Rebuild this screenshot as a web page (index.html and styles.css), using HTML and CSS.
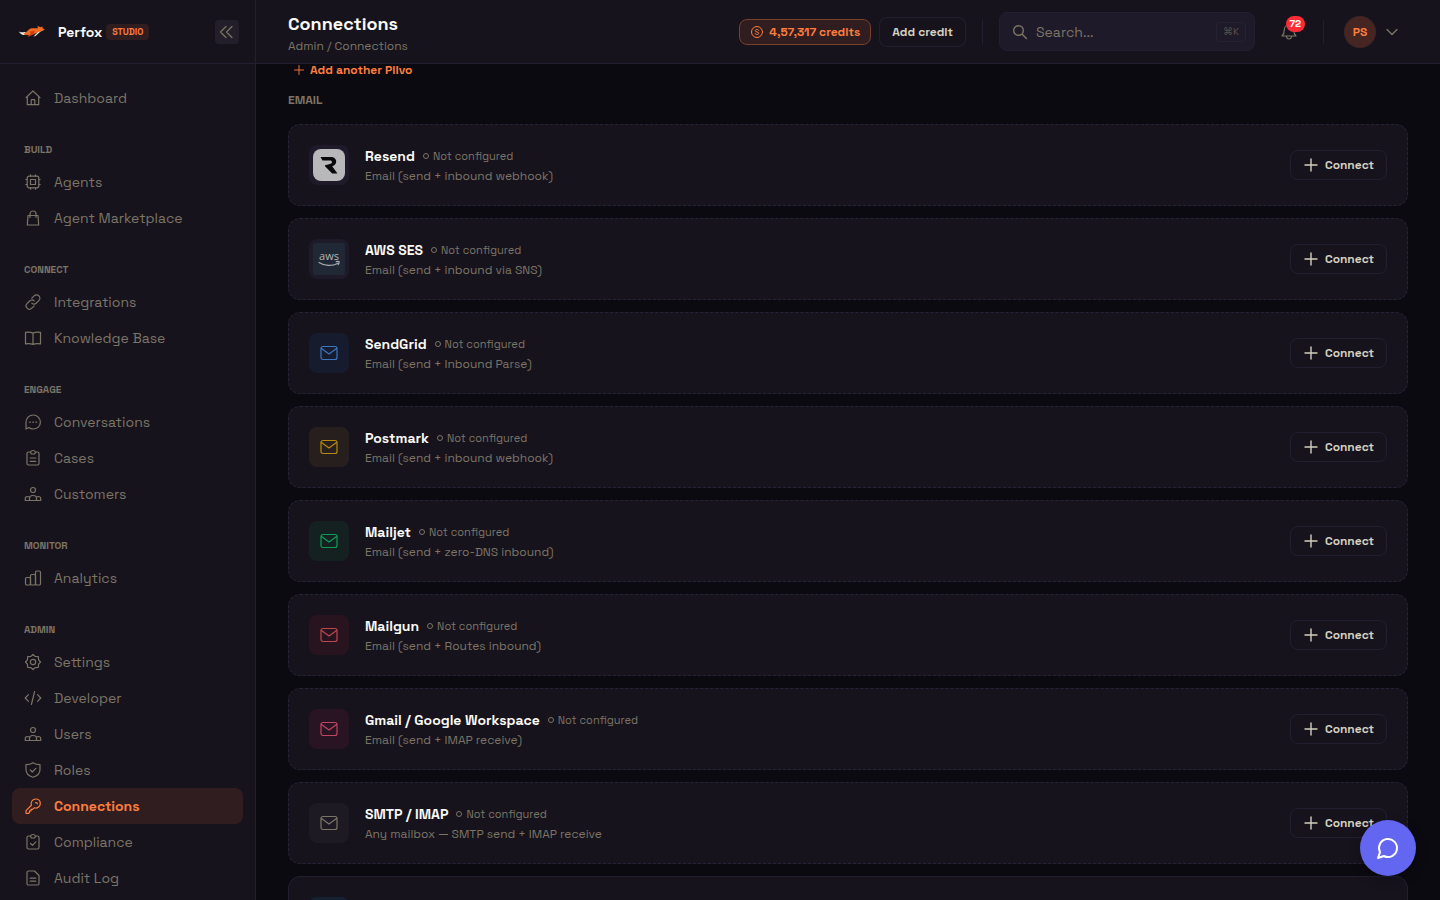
FILE: index.html
```html
<!DOCTYPE html>
<html lang="en">
<head>
<meta charset="utf-8">
<meta name="viewport" content="width=device-width, initial-scale=1">
<title>Connections – Perfox Studio</title>
<link rel="stylesheet" href="styles.css">
</head>
<body>
<svg class="sprite" aria-hidden="true">
  <symbol id="home" viewBox="0 0 18 18"><path d="M2 8.600 9 2l7 6.600M3.300 7.500v8.200h11.400V7.500M7.200 15.700v-4.200c0-.5.3-.8.8-.8h2c.5 0 .8.3.8.8v4.200"/></symbol>
  <symbol id="cpu" viewBox="0 0 18 18"><rect x="3.200" y="3.200" width="11.600" height="11.600" rx="2"/><rect x="6.500" y="6.500" width="5" height="5"/><path d="M6.500 1.800v1.400M11.500 1.800v1.400M6.500 14.800v1.400M11.500 14.800v1.400M1.800 6.500h1.400M1.800 11.500h1.400M14.800 6.500h1.400M14.800 11.500h1.400"/></symbol>
  <symbol id="bag" viewBox="0 0 18 18"><path d="M4 6.500h10l.7 9.500H3.300zM6 8.500V5a3 3 0 0 1 6 0v3.500"/></symbol>
  <symbol id="link" viewBox="0 0 18 18"><path d="m7.800 5.200 2.300-2.300c1.400-1.400 3.500-1.400 4.800-.1s1.300 3.400-.1 4.800l-2.400 2.400c-1.300 1.300-3.300 1.400-4.600.1M10.200 12.800l-2.300 2.300c-1.400 1.400-3.500 1.400-4.800.1s-1.300-3.400.1-4.800L5.600 8c1.300-1.300 3.300-1.400 4.600-.1"/></symbol>
  <symbol id="book" viewBox="0 0 18 18"><path d="M9 4.200C7.600 3.300 5 2.900 1.500 3.300v11.600c3.500-.4 6.100 0 7.500.6 1.400-.6 4-1 7.500-.6V3.300C13 2.900 10.400 3.300 9 4.200zM9 4.200v11.300"/></symbol>
  <symbol id="chat" viewBox="0 0 18 18"><path d="M2 16v-6.700C2 5.300 5.200 2 9.200 2s7.200 3.200 7.200 7.200-3.200 6.800-7.200 6.800c-1.700 0-3.200-.5-4.500-1.500L2 16z"/><path d="M5.700 9.200h.7M8.800 9.200h.7M11.900 9.200h.7"/></symbol>
  <symbol id="clipboard" viewBox="0 0 18 18"><path d="M6 3H4.500C3.700 3 3 3.700 3 4.500v10c0 .9.700 1.500 1.500 1.500h9c.8 0 1.500-.6 1.500-1.500v-10c0-.8-.7-1.500-1.500-1.500H12M6.500 3.200C7 2 8 1.500 9 1.500s2 .5 2.500 1.700L10.700 5H7.300zM6.200 9h5.600M6.200 12.300h5.600"/></symbol>
  <symbol id="clipcheck" viewBox="0 0 18 18"><path d="M6 3H4.500C3.700 3 3 3.700 3 4.500v10c0 .9.700 1.500 1.500 1.500h9c.8 0 1.500-.6 1.500-1.500v-10c0-.8-.7-1.500-1.500-1.500H12M6.500 3.200C7 2 8 1.500 9 1.500s2 .5 2.500 1.700L10.700 5H7.300zM6.500 10.500l2 1.800 3.300-3.500"/></symbol>
  <symbol id="users" viewBox="0 0 18 18"><circle cx="9" cy="5" r="2.500"/><path d="M5.500 15.500v-2.200c0-1.600 1.500-2.800 3.500-2.800s3.500 1.200 3.500 2.800v2.200M1.300 15.500h15.400v-2c0-1.300-1-2-2.200-2-.8 0-1.400.3-1.800.7M5.300 12.200c-.4-.4-1-.7-1.800-.7-1.200 0-2.200.7-2.200 2v2"/></symbol>
  <symbol id="bars" viewBox="0 0 18 18"><rect x="1.500" y="8.500" width="5" height="7.500" rx="1.300"/><rect x="6.500" y="5.500" width="5" height="10.500" rx="1.300"/><rect x="11.500" y="2" width="5" height="14" rx="1.300"/></symbol>
  <symbol id="gear" viewBox="0 0 18 18"><path d="M9 1.500 11.100 3.400 14.300 3.700 14.600 6.900 16.500 9 14.600 11.100 14.300 14.300 11.100 14.600 9 16.500 6.900 14.600 3.700 14.300 3.400 11.100 1.500 9 3.400 6.900 3.700 3.700 6.900 3.400z"/><circle cx="9" cy="9" r="2.700"/></symbol>
  <symbol id="code" viewBox="0 0 18 18"><path d="M4.500 5.700 1.200 9l3.300 3.300M13.500 5.700 16.800 9l-3.300 3.300M10.600 2.500 7.400 15.500"/></symbol>
  <symbol id="shield" viewBox="0 0 18 18"><path d="M9 1.700c1.800 1.300 4.200 2 7 2v4.800c0 4-2.800 6.500-7 7.800-4.200-1.300-7-3.800-7-7.800V3.700c2.800 0 5.200-.7 7-2zM6.300 9l2 2 3.500-3.700"/></symbol>
  <symbol id="key" viewBox="0 0 18 18"><path d="M7.400 8.300C6.200 5.300 8.500 2 11.800 2 14.300 2 16.300 4 16.300 6.400c0 3.300-3.300 5.600-6.200 4.400L8.600 12.300H7v1.600H5.500v1.600L4.700 16.300H2v-2.700z"/><path d="M11.500 5.700c.8-.3 1.700.2 1.800 1.100"/></symbol>
  <symbol id="doc" viewBox="0 0 18 18"><path d="M4.500 2h6L15 6.500v8c0 .9-.7 1.500-1.500 1.500h-9C3.700 16 3 15.400 3 14.500v-11C3 2.700 3.700 2 4.500 2zM6.200 9.200h5.600M6.200 12.200h5.600"/></symbol>
  <symbol id="mail" viewBox="0 0 20 20"><rect x="2" y="3.500" width="16" height="13" rx="2"/><path d="m2.500 5.500 7.500 5.500 7.500-5.500"/></symbol>
  <symbol id="plus" viewBox="0 0 16 16"><path d="M8 2v12M2 8h12"/></symbol>
</svg>
<div class="app">
  <aside class="sidebar">
    <div class="brand">
      <svg class="fox" viewBox="0 0 28 14" aria-hidden="true"><path fill="#f4eee6" d="M.8 6.500c2.200 1.200 4.200.8 6 .6L9 8.500C7 10.500 3.200 10.700.8 6.500z"/><path fill="#f26a21" d="M5.500 8.200C9 8.300 9.600 3.800 14 3.300c2.200-.2 4 .4 6-.3L19.300.8l3 1.500 2-.9.5 2.100L27 4.200l-3 1.700-4.500 1.500-4 1.800-3.500.8H9.500L6.300 9.400z"/><path fill="#c93a13" d="m12 6.500 5-.5-2 3.700-4.500 2.100-1-.8 3.300-2z"/><path fill="#f4eee6" d="m27 4.500-4.500 2-5 4.500-2 .5 4.200-4.300z"/></svg>
      <span class="brand-name">Perfox</span><span class="brand-tag">STUDIO</span>
      <button class="collapse" type="button" aria-label="Collapse sidebar"><svg viewBox="0 0 16 16"><path d="M7 2.500 1.500 8 7 13.500M13 2.500 7.500 8l5.500 5.500"/></svg></button>
    </div>
    <nav class="nav" aria-label="Main">
      <a href="#"><svg><use href="#home"/></svg>Dashboard</a>
      <h2>BUILD</h2>
      <a href="#"><svg><use href="#cpu"/></svg>Agents</a>
      <a href="#"><svg><use href="#bag"/></svg>Agent Marketplace</a>
      <h2>CONNECT</h2>
      <a href="#"><svg><use href="#link"/></svg>Integrations</a>
      <a href="#"><svg><use href="#book"/></svg>Knowledge Base</a>
      <h2>ENGAGE</h2>
      <a href="#"><svg><use href="#chat"/></svg>Conversations</a>
      <a href="#"><svg><use href="#clipboard"/></svg>Cases</a>
      <a href="#"><svg><use href="#users"/></svg>Customers</a>
      <h2>MONITOR</h2>
      <a href="#"><svg><use href="#bars"/></svg>Analytics</a>
      <h2>ADMIN</h2>
      <a href="#"><svg><use href="#gear"/></svg>Settings</a>
      <a href="#"><svg><use href="#code"/></svg>Developer</a>
      <a href="#"><svg><use href="#users"/></svg>Users</a>
      <a href="#"><svg><use href="#shield"/></svg>Roles</a>
      <a href="#" class="active" aria-current="page"><svg><use href="#key"/></svg>Connections</a>
      <a href="#"><svg><use href="#clipcheck"/></svg>Compliance</a>
      <a href="#"><svg><use href="#doc"/></svg>Audit Log</a>
    </nav>
  </aside>
  <div class="page">
    <header class="topbar">
      <div class="heading"><h1>Connections</h1><p>Admin / Connections</p></div>
      <div class="account">
        <button class="credits" type="button"><svg viewBox="0 0 14 14"><circle cx="7" cy="7" r="5.500"/><path d="M8.700 5.500C8.500 4.800 7.800 4.500 7 4.500c-1 0-1.700.4-1.700 1.200C5.300 7.500 8.800 6.500 8.800 8.300c0 .8-.8 1.200-1.800 1.200-.9 0-1.700-.4-1.900-1.100"/></svg>4,57,317 credits</button>
        <button class="btn" type="button">Add credit</button>
      </div>
      <span class="divider"></span>
      <label class="search">
        <svg viewBox="0 0 16 16"><circle cx="6.500" cy="6.500" r="4.800"/><path d="m10.200 10.200 4.300 4.300"/></svg>
        <input type="search" placeholder="Search..." aria-label="Search">
        <kbd>⌘K</kbd>
      </label>
      <button class="bell" type="button" aria-label="Notifications"><svg viewBox="0 0 18 18"><path d="M9 2C6.300 2 4.300 4 4.300 6.700c0 3.300-.8 4.800-2.300 6.300h14c-1.500-1.500-2.300-3-2.300-6.300C13.700 4 11.700 2 9 2zM6.500 13.500c.2 1.500 1.200 2.500 2.500 2.500s2.300-1 2.500-2.500"/></svg><span class="count">72</span></button>
      <span class="divider"></span>
      <button class="user" type="button"><span class="avatar">PS</span><svg viewBox="0 0 16 16"><path d="m3 5.500 5 5 5-5"/></svg></button>
    </header>
    <main class="content">
      <button class="add" type="button"><svg><use href="#plus"/></svg>Add another Plivo</button>
      <h2 class="section">EMAIL</h2>
      <ul class="cards">
        <li class="card">
          <span class="tile brandtile"><svg viewBox="0 0 32 32"><rect width="32" height="32" rx="8" fill="#b8b8ba"/><path fill="#08080a" d="M7.500 8H18c3 0 5.200 1.800 5.200 4.500 0 2.300-1.500 4-4 4.700l5.200 7.300h-5.200l-7.200-7.200v-1l5-1.300c1.400-.4 2-1 2-1.900 0-1-.8-1.700-2-1.700H9.500z"/></svg></span>
          <div class="info"><div class="line"><h3>Resend</h3><span class="status">Not configured</span></div><p>Email (send + inbound webhook)</p></div>
          <button class="btn connect" type="button"><svg><use href="#plus"/></svg>Connect</button>
        </li>
        <li class="card">
          <span class="tile brandtile"><svg viewBox="0 0 32 32"><rect width="32" height="32" rx="2" fill="#1f2834"/><text x="16" y="17" text-anchor="middle" class="aws">aws</text><path fill="none" stroke="#a9aaad" stroke-width="1.200" stroke-linecap="round" d="M6 19.500c5.500 3.600 13 4 19 .7M23.200 18.700c3.700-.8 3.700.3 2 3"/></svg></span>
          <div class="info"><div class="line"><h3>AWS SES</h3><span class="status">Not configured</span></div><p>Email (send + inbound via SNS)</p></div>
          <button class="btn connect" type="button"><svg><use href="#plus"/></svg>Connect</button>
        </li>
        <li class="card">
          <span class="tile blue"><svg><use href="#mail"/></svg></span>
          <div class="info"><div class="line"><h3>SendGrid</h3><span class="status">Not configured</span></div><p>Email (send + Inbound Parse)</p></div>
          <button class="btn connect" type="button"><svg><use href="#plus"/></svg>Connect</button>
        </li>
        <li class="card">
          <span class="tile amber"><svg><use href="#mail"/></svg></span>
          <div class="info"><div class="line"><h3>Postmark</h3><span class="status">Not configured</span></div><p>Email (send + inbound webhook)</p></div>
          <button class="btn connect" type="button"><svg><use href="#plus"/></svg>Connect</button>
        </li>
        <li class="card">
          <span class="tile green"><svg><use href="#mail"/></svg></span>
          <div class="info"><div class="line"><h3>Mailjet</h3><span class="status">Not configured</span></div><p>Email (send + zero-DNS inbound)</p></div>
          <button class="btn connect" type="button"><svg><use href="#plus"/></svg>Connect</button>
        </li>
        <li class="card">
          <span class="tile red"><svg><use href="#mail"/></svg></span>
          <div class="info"><div class="line"><h3>Mailgun</h3><span class="status">Not configured</span></div><p>Email (send + Routes inbound)</p></div>
          <button class="btn connect" type="button"><svg><use href="#plus"/></svg>Connect</button>
        </li>
        <li class="card">
          <span class="tile rose"><svg><use href="#mail"/></svg></span>
          <div class="info"><div class="line"><h3>Gmail / Google Workspace</h3><span class="status">Not configured</span></div><p>Email (send + IMAP receive)</p></div>
          <button class="btn connect" type="button"><svg><use href="#plus"/></svg>Connect</button>
        </li>
        <li class="card">
          <span class="tile gray"><svg><use href="#mail"/></svg></span>
          <div class="info"><div class="line"><h3>SMTP / IMAP</h3><span class="status">Not configured</span></div><p>Any mailbox — SMTP send + IMAP receive</p></div>
          <button class="btn connect" type="button"><svg><use href="#plus"/></svg>Connect</button>
        </li>
        <li class="card on"><span class="tile sky"></span></li>
      </ul>
    </main>
  </div>
  <button class="fab" type="button" aria-label="Open chat"><svg viewBox="0 0 24 24"><path d="M7.900 20A9 9 0 1 0 4 16.100L2 22z"/></svg></button>
</div>
</body>
</html>
```
FILE: styles.css
```css
:root {
  --bg: #0b0a10;
  --panel: #16131d;
  --raised: #1e1a29;
  --line: #231f30;
  --muted: #7c7566;
  --soft: #d5cfbf;
  --bright: #faf9f4;
  --orange: #ff7d3f;
}
* { box-sizing: border-box; }
body {
  margin: 0;
  background: var(--bg);
  color: var(--bright);
  font-family: "Space Grotesk", Inter, "Liberation Sans", sans-serif;
  font-size: 14px;
  line-height: 20px;
}
h1, h2, h3, p, ul { margin: 0; padding: 0; }
button, input, kbd { font: inherit; color: inherit; }
button { background: none; border: 0; padding: 0; cursor: pointer; }
svg { fill: none; stroke: currentColor; stroke-width: 1.2; stroke-linecap: round; stroke-linejoin: round; flex: none; }
.sprite { position: absolute; width: 0; height: 0; }
.app { display: flex; height: 100vh; overflow: hidden; }

.sidebar { width: 256px; flex: none; background: var(--panel); border-right: 1px solid var(--line); display: flex; flex-direction: column; }
.brand { height: 64px; flex: none; display: flex; align-items: center; padding: 0 16px 0 18px; border-bottom: 1px solid var(--line); }
.fox { width: 28px; height: 14px; stroke: none; }
.brand-name { margin-left: 12px; font-weight: 700; }
.brand-tag { margin-left: 4px; padding: 0 6px; border-radius: 4px; background: #2f1d20; color: var(--orange); font-size: 9px; font-weight: 700; line-height: 16px; }
.collapse { margin-left: auto; width: 24px; height: 24px; border-radius: 4px; background: #221f2a; color: var(--muted); display: grid; place-items: center; }
.collapse svg { width: 16px; height: 16px; }
.nav { padding: 16px 12px; overflow: hidden; }
.nav a { display: flex; align-items: center; gap: 12px; height: 36px; padding: 0 12px; border-radius: 8px; color: var(--muted); text-decoration: none; }
.nav a svg { width: 18px; height: 18px; }
.nav .active { background: #2f1d20; color: var(--orange); font-weight: 600; }
.nav h2 { padding: 27px 12px 7px; font-size: 10px; line-height: 14px; font-weight: 700; color: var(--muted); }

.page { flex: 1; min-width: 0; display: flex; flex-direction: column; overflow: hidden; }
.topbar { height: 64px; flex: none; display: flex; align-items: center; gap: 16px; padding: 0 32px; background: var(--panel); border-bottom: 1px solid var(--line); }
.heading { flex: 1; padding-top: 1px; }
.heading h1 { font-size: 18px; line-height: 28px; font-weight: 600; }
.heading p { color: var(--muted); font-size: 12px; line-height: 16px; }
.account { display: flex; align-items: center; gap: 8px; }
.credits { display: flex; align-items: center; gap: 5px; height: 26px; padding: 0 10px; border: 1px solid #79402c; border-radius: 8px; background: #2f1d20; color: var(--orange); font-size: 12px; font-weight: 600; }
.credits svg { width: 14px; height: 14px; stroke-width: 1; }
.btn { display: flex; align-items: center; gap: 6px; height: 30px; padding: 0 12px; border: 1px solid var(--line); border-radius: 8px; color: var(--soft); font-size: 12px; font-weight: 600; }
.btn svg { width: 16px; height: 16px; stroke-width: 1.4; }
.divider { width: 1px; height: 24px; background: var(--line); }
.search { display: flex; align-items: center; gap: 8px; width: 256px; height: 39px; padding: 0 8px 0 12px; border: 1px solid var(--line); border-radius: 8px; background: var(--raised); color: var(--muted); }
.search svg { width: 16px; height: 16px; stroke-width: 1.4; }
.search input { flex: 1; min-width: 0; border: 0; padding: 0; outline: 0; background: none; }
.search input::placeholder { color: var(--muted); opacity: 1; }
.search kbd { padding: 0 6px; border: 1px solid #262234; border-radius: 4px; font-size: 10px; line-height: 18px; color: #565047; }
.bell { position: relative; width: 36px; height: 36px; color: var(--muted); display: grid; place-items: center; }
.bell svg { width: 18px; height: 18px; }
.count { position: absolute; top: 2px; right: 2px; padding: 0 4px; border-radius: 8px; background: #fb2c36; color: #fff; font-size: 10px; font-weight: 700; line-height: 16px; }
.user { display: flex; align-items: center; gap: 8px; padding: 0 8px 0 4px; color: var(--muted); }
.avatar { width: 32px; height: 32px; border-radius: 50%; background: #452623; color: var(--orange); font-size: 12px; line-height: 32px; font-weight: 600; text-align: center; }
.user svg { width: 16px; height: 16px; stroke-width: 1.4; }

.content { flex: 1; min-height: 0; padding: 0 32px; }
.add { display: flex; align-items: center; gap: 5px; margin-left: 5px; color: var(--orange); font-size: 12px; line-height: 12px; font-weight: 600; }
.add svg { width: 12px; height: 12px; }
.section { margin: 16px 0; font-size: 12px; line-height: 16px; font-weight: 700; color: var(--muted); }
.cards { display: flex; flex-direction: column; gap: 12px; list-style: none; }
.card { display: flex; align-items: center; gap: 16px; padding: 20px; border: 1px dashed #282437; border-radius: 12px; background: var(--panel); }
.card.on { border-style: solid; border-color: var(--line); }
.tile { width: 40px; height: 40px; flex: none; border-radius: 8px; display: grid; place-items: center; }
.tile svg { width: 20px; height: 20px; }
.brandtile { background: var(--raised); }
.brandtile svg { width: 32px; height: 32px; stroke: none; }
.aws { font-size: 11px; fill: #b4b4b6; font-family: "Open Sans", sans-serif; }
.blue { background: #161b2d; color: #3c76c2; }
.amber { background: #271f1d; color: #b58a0b; }
.green { background: #152120; color: #0c9e58; }
.red { background: #28141f; color: #b9484f; }
.rose { background: #281422; color: #bf4560; }
.gray { background: #1d1a23; color: var(--muted); }
.sky { background: #142231; }
.info { flex: 1; min-width: 0; padding-bottom: 1px; }
.line { display: flex; align-items: center; gap: 8px; }
.line h3 { font-size: 14px; line-height: 20px; font-weight: 600; }
.status { display: flex; align-items: center; gap: 4px; font-size: 11px; line-height: 16px; color: var(--muted); }
.status::before { content: ""; box-sizing: border-box; width: 6px; height: 6px; border: 1px solid var(--muted); border-radius: 50%; }
.info p { margin-top: 2px; font-size: 12px; line-height: 16px; color: var(--muted); }
.fab { position: fixed; right: 24px; bottom: 24px; width: 56px; height: 56px; border-radius: 50%; background: #6366f1; color: #fff; display: grid; place-items: center; box-shadow: 0 4px 12px rgba(0, 0, 0, .3); }
.fab svg { width: 24px; height: 24px; stroke-width: 2; }
```
